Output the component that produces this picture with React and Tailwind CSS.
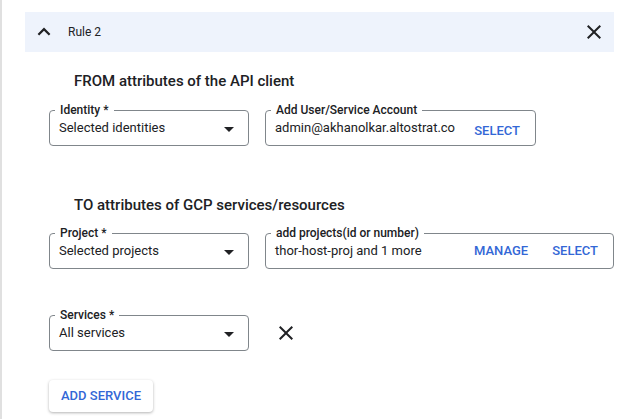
import React from "react";

const font = { fontFamily: "Roboto, 'Liberation Sans', sans-serif" };

const ArrowDrop = () => (
  <svg width="24" height="24" viewBox="0 0 24 24" className="shrink-0 fill-[#202124]">
    <path d="M7 10l5 5 5-5z" />
  </svg>
);

const CloseIcon = ({ className = "" }) => (
  <svg width="24" height="24" viewBox="0 0 24 24" className={`shrink-0 fill-[#202124] ${className}`}>
    <path d="M19 6.41L17.59 5 12 10.59 6.41 5 5 6.41 10.59 12 5 17.59 6.41 19 12 13.41 17.59 19 19 17.59 13.41 12z" />
  </svg>
);

const Field = ({ label, width, children }) => (
  <fieldset className={`${width} shrink-0 rounded-[4px] border border-[#80868b] p-0`}>
    <legend className="ml-[5px] px-[5px] text-[12px] font-medium leading-[14px] text-[#202124]">
      {label}
    </legend>
    <div className="flex h-[28px] items-start pl-[9px] pt-[1px]">{children}</div>
  </fieldset>
);

const SelectField = ({ label, value }) => (
  <Field label={label} width="w-[200px]">
    <span className="flex-1 text-[13px] leading-[20px] text-[#202124]">{value}</span>
    <span className="-mt-[1px] pr-[7px]">
      <ArrowDrop />
    </span>
  </Field>
);

const LinkBtn = ({ children }) => (
  <button className="text-[13px] font-medium uppercase leading-[20px] text-[#3367d6]">{children}</button>
);

export default function App() {
  return (
    <div style={font} className="h-[419px] w-[631px] overflow-hidden border-l-2 border-[#e0e0e0] bg-white">
      <div className="ml-[23px] mr-[17px] mt-[12px] flex h-[40px] items-center bg-[#eef3fc] pl-[7px] pr-[8px]">
        <svg width="24" height="24" viewBox="0 0 24 24" className="shrink-0 fill-[#202124]">
          <path d="M12 7.6l-6.4 6.4 1.6 1.6L12 10.8l4.8 4.8 1.6-1.6z" />
        </svg>
        <span className="ml-[12px] flex-1 text-[12px] text-[#202124]">Rule 2</span>
        <CloseIcon />
      </div>

      <div className="pl-[47px]">
        <h2 className="ml-[25px] mt-[19px] text-[15px] font-medium leading-[20px] text-[#202124]">
          FROM attributes of the API client
        </h2>
        <div className="mt-[12px] flex gap-[16px]">
          <SelectField label="Identity *" value="Selected identities" />
          <Field label="Add User/Service Account" width="w-[271px]">
            <span className="flex-1 text-[13px] leading-[20px] text-[#202124]">admin@akhanolkar.altostrat.co</span>
            <span className="pr-[15px]">
              <LinkBtn>Select</LinkBtn>
            </span>
          </Field>
        </div>

        <h2 className="ml-[25px] mt-[49px] text-[15px] font-medium leading-[20px] text-[#202124]">
          TO attributes of GCP services/resources
        </h2>
        <div className="mt-[11px] flex gap-[16px]">
          <SelectField label="Project *" value="Selected projects" />
          <Field label="add projects(id or number)" width="w-[349px]">
            <span className="flex-1 text-[13px] leading-[20px] text-[#202124]">thor-host-proj and 1 more</span>
            <span className="flex gap-[24px] pr-[15px]">
              <LinkBtn>Manage</LinkBtn>
              <LinkBtn>Select</LinkBtn>
            </span>
          </Field>
        </div>

        <div className="mt-[39px] flex items-center gap-[25px]">
          <SelectField label="Services *" value="All services" />
          <CloseIcon className="mt-[6px]" />
        </div>

        <button className="mt-[29px] h-[32px] rounded-[4px] bg-white px-[12px] text-[13px] font-medium uppercase text-[#3367d6] shadow-[0_1px_3px_rgba(0,0,0,0.3)]">
          Add service
        </button>
      </div>
    </div>
  );
}
